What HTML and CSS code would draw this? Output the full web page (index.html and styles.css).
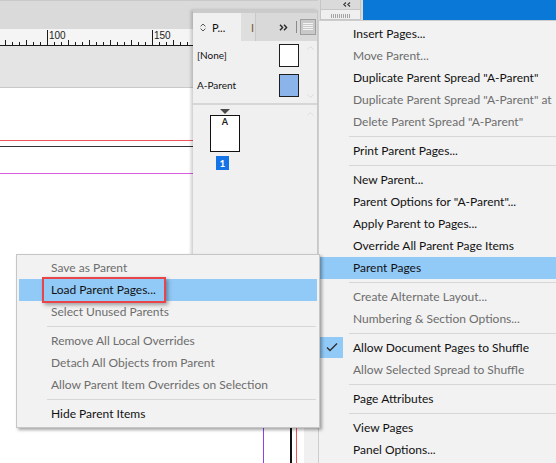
FILE: index.html
```html
<!DOCTYPE html>
<html>
<head>
<meta charset="utf-8">
<link rel="stylesheet" href="styles.css">
</head>
<body>
<div class="screen">
  <div class="workspace">
    <div class="appbar"></div>
    <div class="ruler">
      <svg width="318" height="17" viewBox="0 0 318 17">
        <rect x="0" y="16" width="318" height="1" fill="#1a1a1a"/>
        <path d="M12.5 13v3M19.5 13v3M33.5 13v3M40.5 13v3M54.5 13v3M61.5 13v3M75.5 13v3M82.5 13v3M96.5 13v3M103.5 13v3M117.5 13v3M124.5 13v3M138.5 13v3M145.5 13v3M159.5 13v3M166.5 13v3M180.5 13v3M187.5 13v3" stroke="#1a1a1a" stroke-width="1"/>
        <path d="M5.5 11v5M26.5 11v5M68.5 11v5M89.5 11v5M110.5 11v5M131.5 11v5M173.5 11v5" stroke="#1a1a1a" stroke-width="1"/>
        <path d="M47.5 1v15M152.5 1v15" stroke="#1a1a1a" stroke-width="1"/>
        <text x="49" y="10" class="rlabel">100</text>
        <text x="154" y="10" class="rlabel">150</text>
      </svg>
    </div>
    <div class="docbar"></div>
    <div class="docarea">
      <div class="canvas">
        <svg class="guides" width="304" height="375" viewBox="0 0 304 375">
          <path d="M0 52.5H296.5V375" fill="none" stroke="#f0545c" stroke-width="1"/>
          <path d="M0 58.5H291V375" fill="none" stroke="#333" stroke-width="1"/>
          <path d="M291 58V375" fill="none" stroke="#111" stroke-width="2"/>
          <path d="M0 85.5H263.5" fill="none" stroke="#d85ce2" stroke-width="1"/>
          <path d="M263.5 85V375" fill="none" stroke="#8e44e4" stroke-width="1"/>
        </svg>
      </div>
      <div class="vscroll"></div>
    </div>
  </div>

  <div class="dock">
    <div class="dock-box">
      <div class="dock-head">
        <svg width="8" height="5" viewBox="0 0 8 5"><path d="M3 0.5L0.8 2.5L3 4.5M7 0.5L4.8 2.5L7 4.5" fill="none" stroke="#333" stroke-width="1.1"/></svg>
      </div>
      <div class="dock-grip">
        <svg width="20" height="4" viewBox="0 0 20 4"><path d="M0.5 0v4M2.5 0v4M4.5 0v4M6.5 0v4M8.5 0v4M10.5 0v4M12.5 0v4M14.5 0v4M16.5 0v4M18.5 0v4" stroke="#a3a3a3" stroke-width="1"/></svg>
      </div>
    </div>
  </div>
  <div class="desktop"></div>

  <div class="panel">
    <div class="panel-grip"></div>
    <div class="tabs">
      <div class="tab-active">
        <svg class="updown" width="6" height="9" viewBox="0 0 6 9"><path d="M0.6 3.4L3 1L5.4 3.4M0.6 5.6L3 8L5.4 5.6" fill="none" stroke="#555" stroke-width="1"/></svg>
        <span class="tab-label">P...</span>
      </div>
      <div class="tab-inactive"><span class="tab-stub">I</span></div>
      <div class="tab-tools">
        <svg class="more" width="9" height="7" viewBox="0 0 9 7"><path d="M1 0.8L3.6 3.5L1 6.2M5 0.8L7.6 3.5L5 6.2" fill="none" stroke="#2a2a2a" stroke-width="1.4"/></svg>
        <span class="vsep"></span>
        <span class="menu-btn">
          <svg width="10" height="8" viewBox="0 0 10 8"><path d="M0 0.5H10M0 2.5H10M0 4.5H10M0 6.5H10" stroke="#f4f4f4" stroke-width="1"/></svg>
        </span>
      </div>
    </div>
    <div class="parents">
      <div class="parent-list">
        <div class="parent-row"><span class="parent-label">[None]</span><span class="swatch swatch-none"></span></div>
        <div class="parent-row"><span class="parent-label">A-Parent</span><span class="swatch swatch-a"></span></div>
      </div>
      <div class="panel-scroll">
        <svg width="7" height="4" viewBox="0 0 7 4"><path d="M0.5 3.5L3.5 0.5L6.5 3.5" fill="none" stroke="#dadada" stroke-width="1"/></svg>
        <svg width="7" height="4" viewBox="0 0 7 4"><path d="M0.5 0.5L3.5 3.5L6.5 0.5" fill="none" stroke="#dadada" stroke-width="1"/></svg>
      </div>
    </div>
    <div class="panel-divider"></div>
    <div class="pages">
      <div class="spread">
        <div class="spread-tri"></div>
        <div class="page-thumb">A</div>
        <div class="page-num">1</div>
      </div>
      <svg class="pages-up" width="7" height="4" viewBox="0 0 7 4"><path d="M0.5 3.5L3.5 0.5L6.5 3.5" fill="none" stroke="#dedede" stroke-width="1"/></svg>
    </div>
  </div>

  <div class="menu menu-main">
    <div class="mi">Insert Pages...</div>
    <div class="mi off">Move Parent...</div>
    <div class="mi">Duplicate Parent Spread &quot;A-Parent&quot;</div>
    <div class="mi off">Duplicate Parent Spread &quot;A-Parent&quot; at</div>
    <div class="mi off">Delete Parent Spread &quot;A-Parent&quot;</div>
    <div class="sep"></div>
    <div class="mi">Print Parent Pages...</div>
    <div class="sep"></div>
    <div class="mi">New Parent...</div>
    <div class="mi">Parent Options for &quot;A-Parent&quot;...</div>
    <div class="mi">Apply Parent to Pages...</div>
    <div class="mi">Override All Parent Page Items</div>
    <div class="mi hl">Parent Pages</div>
    <div class="sep"></div>
    <div class="mi off">Create Alternate Layout...</div>
    <div class="mi off">Numbering &amp; Section Options...</div>
    <div class="sep"></div>
    <div class="mi checked"><span class="chk"><svg width="23" height="21" viewBox="0 0 23 21"><path d="M7 10.5L10 13.5L17 6.5" fill="none" stroke="#2b2b2b" stroke-width="1.3"/></svg></span>Allow Document Pages to Shuffle</div>
    <div class="mi off">Allow Selected Spread to Shuffle</div>
    <div class="sep"></div>
    <div class="mi">Page Attributes</div>
    <div class="sep"></div>
    <div class="mi">View Pages</div>
    <div class="mi">Panel Options...</div>
  </div>

  <div class="menu menu-sub">
    <div class="mi off">Save as Parent</div>
    <div class="mi hl">Load Parent Pages...<span class="callout"></span></div>
    <div class="mi off">Select Unused Parents</div>
    <div class="sep"></div>
    <div class="mi off">Remove All Local Overrides</div>
    <div class="mi off">Detach All Objects from Parent</div>
    <div class="mi off">Allow Parent Item Overrides on Selection</div>
    <div class="sep"></div>
    <div class="mi">Hide Parent Items</div>
  </div>
</div>
</body>
</html>
```

FILE: styles.css
```css
* { box-sizing: border-box; margin: 0; padding: 0; }
html, body { width: 556px; height: 463px; overflow: hidden; }
body { background: #fff; font-family: Lato, "Noto Sans", sans-serif; }

.screen { position: relative; width: 556px; height: 463px; display: flex; overflow: hidden; }

/* background application */
.workspace { width: 318px; flex: none; display: flex; flex-direction: column; }
.appbar { height: 29px; background: #dadada; border-top: 1px solid #c9c9c9; }
.ruler { height: 17px; background: #f5f5f5; }
.ruler svg { display: block; }
.rlabel { font-family: "Liberation Sans", Arial, sans-serif; font-size: 10px; fill: #1c1c1c; }
.docbar { height: 42px; background: #e4e4e4; border-bottom: 1px solid #c9c9c9; }
.docarea { flex: 1; display: flex; }
.canvas { flex: 1; background: #fff; overflow: hidden; }
.guides { display: block; }
.vscroll { width: 14px; background: #f0f0f0; }

.dock { width: 45px; flex: none; background: #dadada; padding: 0 2px; }
.dock-box { border-left: 1px solid #c6c6c6; border-right: 1px solid #c6c6c6; }
.dock-head { height: 10px; border-bottom: 1px solid #c6c6c6; display: flex; align-items: center; justify-content: flex-end; padding-right: 9px; }
.dock-head svg { display: block; }
.dock-grip { height: 10px; background: #efefef; border-bottom: 1px solid #c6c6c6; padding: 4px 0 0 10px; }
.dock-grip svg { display: block; }
.desktop { flex: 1; background: #0a78d7; }

/* pages panel */
.panel { position: absolute; left: 193px; top: 10px; width: 125px; height: 300px; background: #f0f0f0; border-right: 1px solid #c8c8c8; box-shadow: -2px 0 3px rgba(0,0,0,0.2); display: flex; flex-direction: column; }
.panel-grip { height: 3px; background: #cbcbcb; }
.tabs { height: 28px; display: flex; background: #d9d9d9; }
.tab-active { width: 48px; background: #f0f0f0; display: flex; align-items: center; padding-left: 7px; gap: 6px; }
.updown { display: block; }
.tab-label { font-size: 11px; color: #111; }
.tab-inactive { width: 15px; background: #dedede; border-right: 1px solid #c8c8c8; display: flex; align-items: center; padding-left: 10px; overflow: hidden; }
.tab-stub { font-size: 11px; color: #7a5630; }
.tab-tools { flex: 1; display: flex; align-items: center; padding-left: 23px; }
.more { display: block; }
.vsep { width: 1px; height: 12px; background: #8a8a8a; margin-left: 8px; }
.menu-btn { width: 16px; height: 16px; margin-left: 3px; background: #c9c9c9; border: 1px solid #9e9e9e; display: flex; align-items: center; justify-content: center; }
.menu-btn svg { display: block; }

.parents { height: 62px; display: flex; overflow: hidden; }
.parent-list { flex: 1; padding: 3px 6px 0 4px; }
.parent-row { height: 30px; display: flex; justify-content: space-between; align-items: flex-start; }
.parent-label { font-size: 10px; line-height: 23px; color: #111; }
.swatch { width: 20px; height: 23px; border: 1px solid #1e1e1e; }
.swatch-none { background: #fff; }
.swatch-a { background: #8ab4ea; }
.panel-scroll { width: 12px; display: flex; flex-direction: column; justify-content: space-between; align-items: center; padding: 5px 2px 5px 0; }
.panel-scroll svg { display: block; }
.panel-divider { height: 2px; background: #d6d6d6; }
.pages { flex: 1; position: relative; padding: 4px 0 0 17px; }
.spread { width: 30px; display: flex; flex-direction: column; align-items: center; }
.spread-tri { width: 0; height: 0; border-left: 5px solid transparent; border-right: 5px solid transparent; border-top: 5px solid #4a4a4a; margin-left: -1px; }
.page-thumb { margin-top: 1px; width: 30px; height: 37px; background: #fff; border: 1px solid #111; text-align: center; font-size: 9px; font-weight: 700; line-height: 10px; padding-top: 1px; color: #222; }
.page-num { align-self: flex-start; margin: 4px 0 0 6px; width: 13px; height: 14px; background: #1473e6; color: #fff; font-size: 10px; font-weight: 700; line-height: 14px; text-align: center; }
.pages-up { position: absolute; right: 3px; top: 7px; }

/* menus */
.menu { position: absolute; background: #f2f2f2; font-size: 12px; color: #111; }
.menu-main { left: 318px; top: 20px; width: 240px; height: 450px; border-left: 1px solid #cdcdcd; border-top: 1px solid #cdcdcd; padding: 2px 0 0 1px; }
.menu-sub { left: 16px; top: 254px; width: 304px; border: 1px solid #c6c6c6; padding: 2px; box-shadow: 2px 2px 3px rgba(0,0,0,0.35); }
.mi { position: relative; height: 22px; line-height: 22px; padding-left: 33px; white-space: nowrap; }
.menu-sub .mi { padding-left: 32px; }
.mi.off { color: #6d6d6d; }
.mi.hl { background: #91c9f7; }
.sep { position: relative; height: 7px; }
.sep::after { content: ""; position: absolute; left: 29px; right: 0; top: 3px; height: 1px; background: #d7d7d7; }
.menu-sub .sep::after { left: 28px; right: 1px; }
.chk { position: absolute; left: 0; top: 0; width: 23px; height: 21px; background: #91c9f7; }
.chk svg { display: block; }
.callout { position: absolute; left: 23px; top: -2px; width: 124px; height: 26px; border: 2px solid #e8454b; box-shadow: 2px 2px 4px rgba(0,0,0,0.35); }
```
